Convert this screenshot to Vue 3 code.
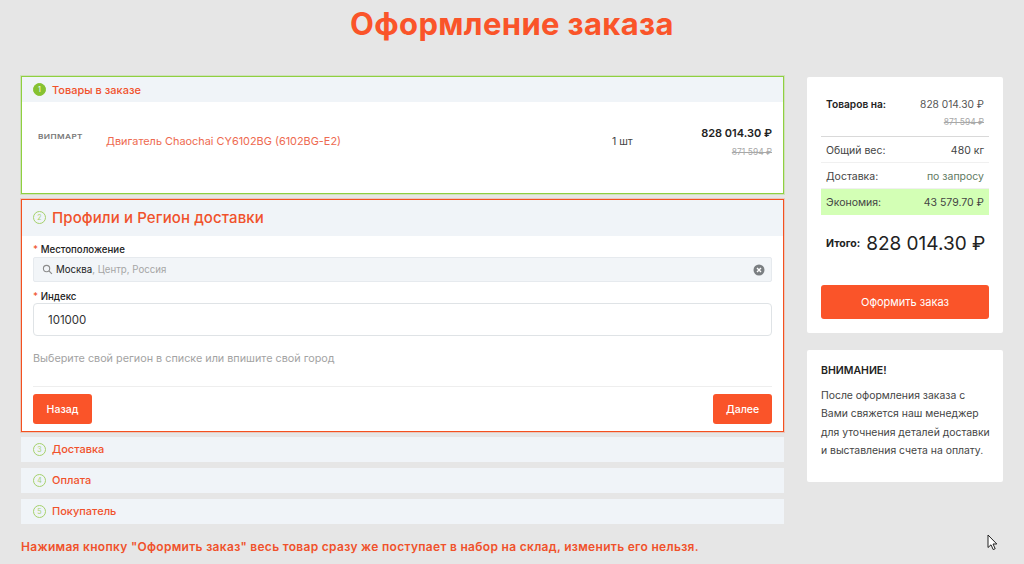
<script setup>
const summaryRows = [
  { label: 'Общий вес:', value: '480 кг' },
  { label: 'Доставка:', value: 'по запросу', muted: true },
]
const closedSteps = [
  { num: 3, title: 'Доставка' },
  { num: 4, title: 'Оплата' },
  { num: 5, title: 'Покупатель' },
]
</script>

<template>
  <div class="page">
    <h1 class="page-title">Оформление заказа</h1>
    <div class="layout">
      <main class="steps">
        <section class="step step--done">
          <header class="step-head">
            <span class="step-num step-num--filled">1</span>
            <span class="step-title">Товары в заказе</span>
          </header>
          <div class="product">
            <span class="logo">ВИПМАРТ</span>
            <a class="product-name">Двигатель Chaochai CY6102BG (6102BG-E2)</a>
            <span class="product-qty">1 шт</span>
            <div class="product-price">
              <b>828 014.30 ₽</b>
              <s>871 594 ₽</s>
            </div>
          </div>
        </section>

        <section class="step step--active">
          <header class="step-head step-head--big">
            <span class="step-num">2</span>
            <span class="step-title step-title--big">Профили и Регион доставки</span>
          </header>
          <div class="form">
            <label class="field-label"><i>*</i> Местоположение</label>
            <div class="location">
              <svg class="search-icon" viewBox="0 0 14 14" aria-hidden="true">
                <circle cx="5.8" cy="5.8" r="4" fill="none" stroke="#8c8c8c" stroke-width="1.4" />
                <path d="M8.8 8.8L12.6 12.6" stroke="#8c8c8c" stroke-width="1.5" />
              </svg>
              <span class="location-city">Москва</span><span class="location-rest">, Центр, Россия</span>
              <svg class="clear-icon" viewBox="0 0 12 12" aria-hidden="true">
                <circle cx="6" cy="6" r="5.5" fill="#7b7f82" />
                <path d="M4 4L8 8M8 4L4 8" stroke="#fff" stroke-width="1.4" />
              </svg>
            </div>
            <label class="field-label field-label--second"><i>*</i> Индекс</label>
            <div class="zip">101000</div>
            <p class="hint">Выберите свой регион в списке или впишите свой город</p>
            <div class="form-actions">
              <button type="button" class="btn">Назад</button>
              <button type="button" class="btn">Далее</button>
            </div>
          </div>
        </section>

        <section v-for="s in closedSteps" :key="s.num" class="step-closed">
          <span class="step-num">{{ s.num }}</span>
          <span class="step-title">{{ s.title }}</span>
        </section>

        <p class="warning">Нажимая кнопку "Оформить заказ" весь товар сразу же поступает в набор на склад, изменить его нельзя.</p>
      </main>

      <aside class="side">
        <div class="card card--total">
          <div class="goods">
            <b>Товаров на:</b>
            <div class="goods-price">
              <span>828 014.30 ₽</span>
              <s>871 594 ₽</s>
            </div>
          </div>
          <div v-for="r in summaryRows" :key="r.label" class="sum-row">
            <span>{{ r.label }}</span>
            <span :class="{ muted: r.muted }">{{ r.value }}</span>
          </div>
          <div class="sum-row sum-row--save">
            <span>Экономия:</span>
            <span>43 579.70 ₽</span>
          </div>
          <div class="total">
            <b>Итого:</b>
            <span>828 014.30 ₽</span>
          </div>
          <button type="button" class="btn btn--wide">Оформить заказ</button>
        </div>
        <div class="card card--note">
          <h3>ВНИМАНИЕ!</h3>
          <p>После оформления заказа с Вами свяжется наш менеджер для уточнения деталей доставки и выставления счета на оплату.</p>
        </div>
      </aside>
    </div>

    <svg class="cursor" viewBox="0 0 11 17" aria-hidden="true">
      <path d="M1 1V13.5L4 10.8L6.2 15.6L8.2 14.7L6 10H9.8Z" fill="#fff" stroke="#222" stroke-width="1" />
    </svg>
  </div>
</template>

<style>
html, body {
  margin: 0;
  background: #e6e6e6;
}
</style>

<style scoped>
.page {
  position: relative;
  width: 1024px;
  height: 564px;
  overflow: hidden;
  background: #e6e6e6;
  font-family: Inter, "Noto Sans", sans-serif;
  color: #222;
}

.page-title {
  margin: 0;
  height: 76px;
  padding-top: 3px;
  box-sizing: border-box;
  text-align: center;
  font-size: 31px;
  line-height: 42px;
  font-weight: 700;
  letter-spacing: 0.35px;
  color: #fa5429;
}

.layout {
  display: grid;
  grid-template-columns: 763px 196px;
  column-gap: 23px;
  padding-left: 21px;
}

.steps {
  display: flex;
  flex-direction: column;
}

.step {
  border: 1px solid #8fd040;
  background: #fff;
  box-sizing: border-box;
}

.step--done {
  height: 118px;
  box-shadow: 0 0 0 1px rgb(143 208 64 / 0.25);
}

.step--active {
  height: 233px;
  margin-top: 5px;
  border-color: #f4501f;
  box-shadow: 0 0 0 1px rgb(244 80 31 / 0.2);
}

.step-head {
  display: flex;
  align-items: center;
  gap: 6px;
  height: 25px;
  padding-left: 11px;
  background: #f0f4f8;
}

.step-head--big {
  height: 36px;
  padding-bottom: 2px;
  box-sizing: border-box;
}

.step-num {
  width: 11px;
  height: 11px;
  border: 1px solid #a5d16c;
  border-radius: 50%;
  display: flex;
  align-items: center;
  justify-content: center;
  font-size: 7px;
  color: #a5d16c;
  flex: none;
}

.step-num--filled {
  background: #86c232;
  border-color: #86c232;
  color: #fff;
}

.step-title {
  font-size: 11px;
  font-weight: 500;
  color: #f0522c;
}

.step-title--big {
  font-size: 15px;
  letter-spacing: 0.1px;
}

.product {
  display: grid;
  grid-template-columns: 68px 506px 69px 1fr;
  align-items: center;
  height: 78px;
  padding: 0 11px 0 16px;
}

.logo {
  font-size: 6.5px;
  font-weight: 600;
  letter-spacing: 0.3px;
  color: #777;
  margin-top: -8px;
  transform: scaleX(1.27);
  transform-origin: left center;
}

.product-name {
  font-size: 10.9px;
  color: #ee6a50;
}

.product-qty {
  font-size: 10.5px;
  color: #444;
}

.product-price {
  display: flex;
  flex-direction: column;
  align-items: flex-end;
  gap: 7px;
  font-size: 11px;
}

.product-price b {
  font-weight: 600;
}

.product-price s,
.goods-price s {
  font-size: 8.5px;
  color: #a8a8a8;
}

.form {
  padding: 7px 11px 0;
}

.field-label {
  display: block;
  font-size: 9.7px;
  line-height: 13px;
  font-weight: 500;
  color: #222;
}

.field-label i {
  color: #f0522c;
  font-style: normal;
}

.field-label--second {
  margin-top: 8px;
}

.location {
  display: flex;
  align-items: center;
  box-sizing: border-box;
  height: 25px;
  margin-top: 1px;
  padding: 0 6px 0 8px;
  background: #f2f5f8;
  border: 1px solid #e6eaee;
  border-radius: 2px;
  font-size: 9.7px;
}

.search-icon {
  width: 11px;
  height: 11px;
  margin-right: 3px;
}

.location-rest {
  color: #a6a6a6;
}

.clear-icon {
  width: 12px;
  height: 12px;
  margin-left: auto;
}

.zip {
  box-sizing: border-box;
  height: 33px;
  padding-left: 14px;
  line-height: 32px;
  border: 1px solid #dfe3e6;
  border-radius: 4px;
  font-size: 11.5px;
  color: #333;
}

.hint {
  margin: 16px 0 20px;
  font-size: 10.8px;
  line-height: 14px;
  color: #a3a3a3;
}

.form-actions {
  display: flex;
  justify-content: space-between;
  padding-top: 7px;
  border-top: 1px solid #eee;
}

.btn {
  width: 59px;
  height: 30px;
  padding: 0;
  border: 0;
  border-radius: 3px;
  background: #fa5429;
  color: #fff;
  font-family: inherit;
  font-size: 10.5px;
  font-weight: 500;
}

.btn--wide {
  display: block;
  width: 168px;
  height: 34px;
  font-size: 11px;
  font-weight: 400;
}

.step-closed {
  display: flex;
  align-items: center;
  gap: 6px;
  box-sizing: border-box;
  height: 25px;
  margin-top: 6px;
  padding: 0 0 1px 12px;
  background: #f0f4f8;
}

.step--active + .step-closed {
  margin-top: 5px;
}

.warning {
  margin: 15px 0 0;
  font-size: 12px;
  line-height: 16px;
  font-weight: 600;
  letter-spacing: 0.3px;
  white-space: nowrap;
  color: #f0522c;
}

.side {
  display: flex;
  flex-direction: column;
  gap: 17px;
  margin-top: 1px;
}

.card {
  background: #fff;
  border-radius: 2px;
  box-sizing: border-box;
  padding: 0 14px;
}

.card--total {
  height: 256px;
  padding-top: 19px;
}

.goods {
  display: flex;
  justify-content: space-between;
  box-sizing: border-box;
  height: 41px;
  padding: 2px 5px 0;
  border-bottom: 1px solid #d9d9d9;
  font-size: 10.2px;
}

.goods b {
  font-weight: 600;
}

.goods-price {
  display: flex;
  flex-direction: column;
  align-items: flex-end;
  gap: 7px;
  color: #555;
}

.sum-row {
  display: flex;
  justify-content: space-between;
  align-items: center;
  box-sizing: border-box;
  height: 26px;
  padding: 1px 5px 0;
  border-bottom: 1px solid #f0f0f0;
  font-size: 10.5px;
  color: #444;
}

.sum-row .muted {
  color: #5f7a5f;
}

.sum-row--save {
  background: #d3ffb5;
  border-bottom: 0;
}

.total {
  display: flex;
  align-items: center;
  gap: 6px;
  height: 56px;
  padding-left: 5px;
  margin-bottom: 14px;
}

.total b {
  font-size: 10.5px;
  font-weight: 700;
}

.total span {
  font-size: 19px;
  font-weight: 400;
  white-space: nowrap;
}

.card--note {
  height: 132px;
  padding: 14px 11px 0 14px;
}

.card--note h3 {
  margin: 0 0 9px;
  font-size: 10.5px;
  line-height: 14px;
  font-weight: 600;
}

.card--note p {
  margin: 0;
  font-size: 10.4px;
  line-height: 18.4px;
  color: #444;
}

.cursor {
  position: absolute;
  left: 987px;
  top: 534px;
  width: 11px;
  height: 17px;
}
</style>
